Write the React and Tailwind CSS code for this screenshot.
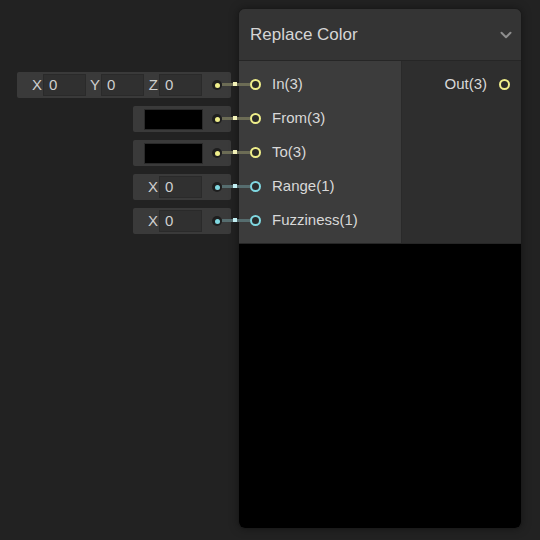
import { ChevronDown } from 'lucide-react';

const ports = [
  { label: 'In(3)', kind: 'xyz', ring: 'border-[#efee8a]', dot: 'bg-[#efee8a]', wire: 'bg-[#6c6c55]', tip: 'bg-[#f3f2b8]' },
  { label: 'From(3)', kind: 'color', ring: 'border-[#efee8a]', dot: 'bg-[#efee8a]', wire: 'bg-[#6c6c55]', tip: 'bg-[#f3f2b8]' },
  { label: 'To(3)', kind: 'color', ring: 'border-[#efee8a]', dot: 'bg-[#efee8a]', wire: 'bg-[#6c6c55]', tip: 'bg-[#f3f2b8]' },
  { label: 'Range(1)', kind: 'x', ring: 'border-[#80d8e1]', dot: 'bg-[#80d8e1]', wire: 'bg-[#566d6f]', tip: 'bg-[#c2eef2]' },
  { label: 'Fuzziness(1)', kind: 'x', ring: 'border-[#80d8e1]', dot: 'bg-[#80d8e1]', wire: 'bg-[#566d6f]', tip: 'bg-[#c2eef2]' },
];

function Field({ axis }) {
  return (
    <div className="flex items-center">
      <span className="w-[15px] pr-[1px] text-right">{axis}</span>
      <div className="flex h-[22px] w-[43px] items-center border border-[#2a2a2a] bg-[#303030] pl-[5px]">0</div>
    </div>
  );
}

function InputBox({ port }) {
  const wide = port.kind === 'xyz';
  return (
    <div className={`flex h-[26px] items-center rounded-[2px] bg-[#3a3a3a] pl-[11px] ${wide ? 'w-[214px]' : 'w-[98px]'}`}>
      {port.kind === 'xyz' && (
        <>
          <Field axis="X" />
          <Field axis="Y" />
          <Field axis="Z" />
        </>
      )}
      {port.kind === 'x' && <Field axis="X" />}
      {port.kind === 'color' && <div className="h-[21px] w-[59px] border border-[#2a2a2a] bg-black" />}
      <div className="ml-auto flex w-[28px] justify-center">
        <div className="flex h-[10px] w-[10px] items-center justify-center rounded-full bg-[#1e1e1e]">
          <div className={`h-[5px] w-[5px] rounded-full ${port.dot}`} />
        </div>
      </div>
    </div>
  );
}

export default function App() {
  return (
    <div
      className="flex h-[540px] w-[540px] overflow-hidden bg-[#222222] text-[15px] text-[#cfcfcf]"
      style={{ fontFamily: '"Liberation Sans", Arial, sans-serif' }}
    >
      <div className="flex w-[231px] flex-col items-end gap-[8px] pt-[72px]">
        {ports.map((p) => (
          <InputBox key={p.label} port={p} />
        ))}
      </div>

      <div className="ml-[7px] mt-[8px] flex h-[521px] w-[284px] flex-col rounded-[7px] border border-[#1a1a1a] bg-[#2e2e2e] shadow-[0_0_10px_rgba(0,0,0,0.35)]">
        <div className="flex h-[52px] shrink-0 items-center justify-between rounded-t-[6px] border-b border-[#262626] bg-[#343434] pl-[11px] pr-[6px]">
          <span className="text-[17px] text-[#d6d6d6]">Replace Color</span>
          <ChevronDown size={18} strokeWidth={2.6} color="#8e8e8e" />
        </div>

        <div className="flex h-[183px] shrink-0 border-b border-[#262626]">
          <div className="flex w-[163px] flex-col border-r border-[#2a2a2a] bg-[#3c3c3c] py-[6px]">
            {ports.map((p) => (
              <div key={p.label} className="relative flex h-[34px] items-center pl-[11px]">
                <div className={`absolute left-[-17px] top-[16px] h-[3px] w-[28px] ${p.wire}`} />
                <div className={`absolute left-[-6px] top-[15px] h-[4px] w-[4px] ${p.tip}`} />
                <div className={`relative h-[11px] w-[11px] rounded-full border-2 bg-[#2b2b2b] ${p.ring}`} />
                <span className="ml-[11px] text-[#d8d8d8]">{p.label}</span>
              </div>
            ))}
          </div>
          <div className="flex flex-1 flex-col bg-[#2e2e2e] py-[6px]">
            <div className="flex h-[34px] items-center justify-end pr-[11px]">
              <span className="text-[#d8d8d8]">Out(3)</span>
              <div className="ml-[12px] h-[11px] w-[11px] rounded-full border-2 border-[#efee8a] bg-[#2b2b2b]" />
            </div>
          </div>
        </div>

        <div className="flex-1 rounded-b-[6px] bg-black" />
      </div>
    </div>
  );
}
